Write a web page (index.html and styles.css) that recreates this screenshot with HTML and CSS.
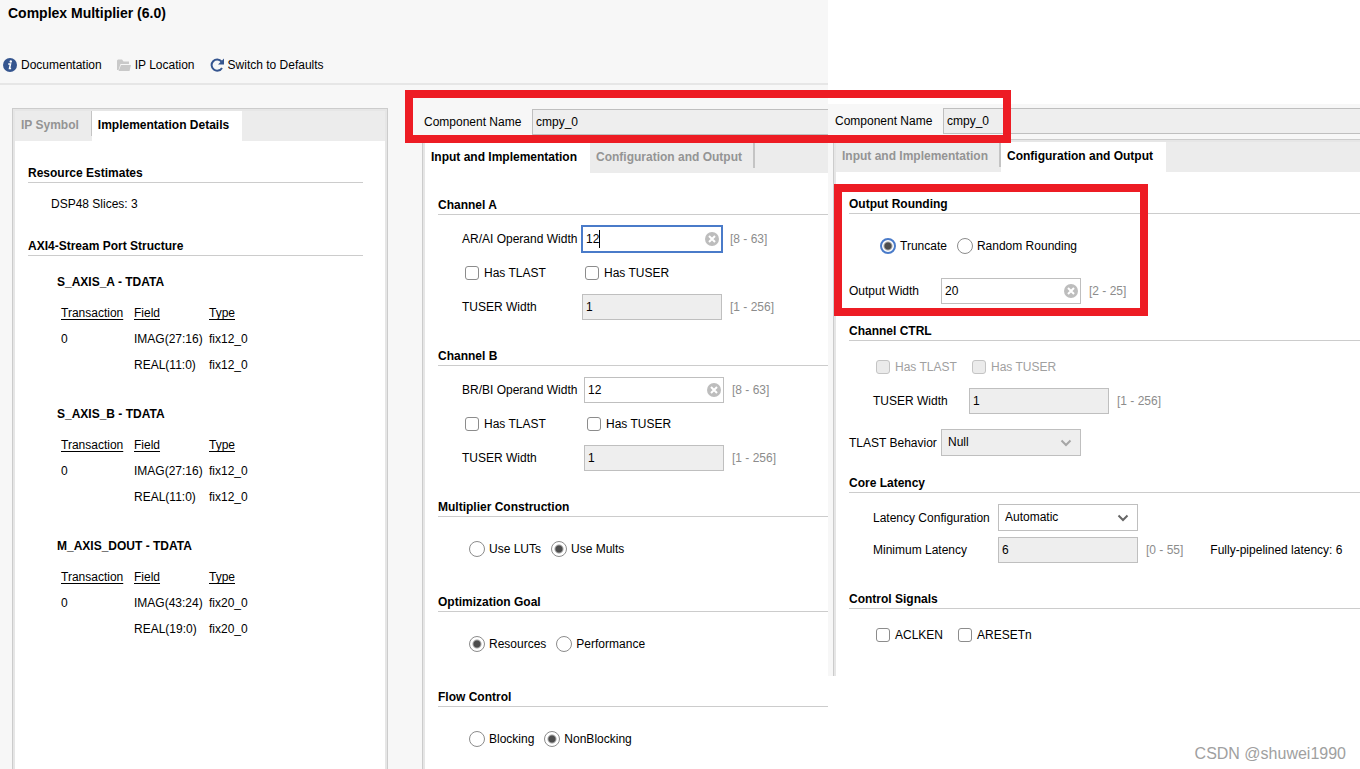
FILE: index.html
```html
<!DOCTYPE html>
<html lang="en">
<head>
    <meta charset="UTF-8">
    <meta name="viewport" content="width=device-width, initial-scale=1.0">
    <title>Complex Multiplier (6.0)</title>
    <link rel="stylesheet" href="styles.css">
</head>
<body>
    <!-- shared icons -->
    <svg class="sprite" aria-hidden="true">
        <symbol id="icon-clear" viewBox="0 0 14 14">
            <circle cx="7" cy="7" r="7" fill="#bdbdbd"/>
            <path d="M4 4l6 6M10 4l-6 6" stroke="#fff" stroke-width="2"/>
        </symbol>
        <symbol id="icon-chevron" viewBox="0 0 12 8">
            <path d="M1.500 1.500l4.500 4.500l4.500-4.500" fill="none" stroke="currentColor" stroke-width="2"/>
        </symbol>
    </svg>

    <div class="page">
        <div class="workspace">
            <header class="header">
                <h1 class="title">Complex Multiplier (6.0)</h1>
                <div class="toolbar">
                    <button class="tool">
                        <svg width="14" height="14" viewBox="0 0 14 14">
                            <circle cx="7" cy="7" r="7" fill="#35558f"/>
                            <circle cx="7.800" cy="3.500" r="1.200" fill="#fff"/>
                            <path d="M5.200 6h2.300l-1 4.500h1.600" fill="none" stroke="#fff" stroke-width="1.500"/>
                        </svg>
                        Documentation
                    </button>
                    <button class="tool">
                        <svg width="14" height="14" viewBox="0 0 14 14">
                            <path d="M0 12V2.500L1 1.500h4l1.500 2H12V6H3.500L1.500 12z" fill="#c9c9c9"/>
                            <path d="M4 7h10l-1.500 6H1.500z" fill="#c9c9c9"/>
                        </svg>
                        IP Location
                    </button>
                    <button class="tool">
                        <svg width="14" height="14" viewBox="0 0 14 14">
                            <path d="M11.500 3.500A5.600 5.600 0 1 0 12 10" fill="none" stroke="#35558f" stroke-width="2"/>
                            <path d="M14 0.500V6.500H8z" fill="#35558f"/>
                        </svg>
                        Switch to Defaults
                    </button>
                </div>
            </header>

            <div class="workspace-body">
                <div class="panel port-panel">
                    <div class="tabs">
                        <button class="tab">IP Symbol</button>
                        <button class="tab active">Implementation Details</button>
                    </div>
                    <div class="panel-body">
                        <h2 class="section-title">Resource Estimates</h2>
                        <p class="estimate">DSP48 Slices: 3</p>

                        <h2 class="section-title">AXI4-Stream Port Structure</h2>
                        <div class="port">
                            <h3 class="port-title">S_AXIS_A - TDATA</h3>
                            <table class="port-table">
                                <tr><th>Transaction</th><th>Field</th><th>Type</th></tr>
                                <tr><td>0</td><td>IMAG(27:16)</td><td>fix12_0</td></tr>
                                <tr><td></td><td>REAL(11:0)</td><td>fix12_0</td></tr>
                            </table>
                        </div>
                        <div class="port">
                            <h3 class="port-title">S_AXIS_B - TDATA</h3>
                            <table class="port-table">
                                <tr><th>Transaction</th><th>Field</th><th>Type</th></tr>
                                <tr><td>0</td><td>IMAG(27:16)</td><td>fix12_0</td></tr>
                                <tr><td></td><td>REAL(11:0)</td><td>fix12_0</td></tr>
                            </table>
                        </div>
                        <div class="port">
                            <h3 class="port-title">M_AXIS_DOUT - TDATA</h3>
                            <table class="port-table">
                                <tr><th>Transaction</th><th>Field</th><th>Type</th></tr>
                                <tr><td>0</td><td>IMAG(43:24)</td><td>fix20_0</td></tr>
                                <tr><td></td><td>REAL(19:0)</td><td>fix20_0</td></tr>
                            </table>
                        </div>
                    </div>
                </div>

                <div class="settings">
                    <div class="component">
                        <label for="name-a">Component Name</label>
                        <input class="text-box" id="name-a" type="text" value="cmpy_0" readonly>
                    </div>
                    <div class="panel">
                        <div class="tabs">
                            <button class="tab active">Input and Implementation</button>
                            <button class="tab">Configuration and Output</button>
                        </div>
                        <div class="panel-body">
                            <h2 class="section-title">Channel A</h2>
                            <div class="fields channel-a">
                                <label for="ar-width">AR/AI Operand Width</label>
                                <div class="box-wrap">
                                    <input class="text-box focused" id="ar-width" type="text" value="12">
                                    <span class="caret"></span>
                                    <button class="clear" aria-label="Clear"><svg width="14" height="14"><use href="#icon-clear"/></svg></button>
                                </div>
                                <span class="range">[8 - 63]</span>
                                <label class="check"><input type="checkbox">Has TLAST</label>
                                <label class="check last"><input type="checkbox">Has TUSER</label>
                                <label for="a-tuser">TUSER Width</label>
                                <input class="text-box" id="a-tuser" type="text" value="1" readonly>
                                <span class="range">[1 - 256]</span>
                            </div>

                            <h2 class="section-title">Channel B</h2>
                            <div class="fields channel-b">
                                <label for="br-width">BR/BI Operand Width</label>
                                <div class="box-wrap">
                                    <input class="text-box" id="br-width" type="text" value="12">
                                    <button class="clear" aria-label="Clear"><svg width="14" height="14"><use href="#icon-clear"/></svg></button>
                                </div>
                                <span class="range">[8 - 63]</span>
                                <label class="check"><input type="checkbox">Has TLAST</label>
                                <label class="check last"><input type="checkbox">Has TUSER</label>
                                <label for="b-tuser">TUSER Width</label>
                                <input class="text-box" id="b-tuser" type="text" value="1" readonly>
                                <span class="range">[1 - 256]</span>
                            </div>

                            <h2 class="section-title">Multiplier Construction</h2>
                            <div class="radios">
                                <label><input type="radio" name="construction">Use LUTs</label>
                                <label><input type="radio" name="construction" checked>Use Mults</label>
                            </div>

                            <h2 class="section-title">Optimization Goal</h2>
                            <div class="radios">
                                <label><input type="radio" name="goal" checked>Resources</label>
                                <label><input type="radio" name="goal">Performance</label>
                            </div>

                            <h2 class="section-title">Flow Control</h2>
                            <div class="radios flow">
                                <label><input type="radio" name="flow">Blocking</label>
                                <label><input type="radio" name="flow" checked>NonBlocking</label>
                            </div>
                        </div>
                    </div>
                </div>
            </div>
        </div>

        <div class="side">
            <div class="side-inner">
                <div class="component">
                    <label for="name-b">Component Name</label>
                    <input class="text-box" id="name-b" type="text" value="cmpy_0" readonly>
                </div>
                <div class="panel">
                    <div class="tabs">
                        <button class="tab">Input and Implementation</button>
                        <button class="tab active">Configuration and Output</button>
                    </div>
                    <div class="panel-body">
                        <h2 class="section-title">Output Rounding</h2>
                        <div class="radios rounding">
                            <label><input class="focused" type="radio" name="rounding" checked>Truncate</label>
                            <label><input type="radio" name="rounding">Random Rounding</label>
                        </div>
                        <div class="fields output-width">
                            <label for="out-width">Output Width</label>
                            <div class="box-wrap">
                                <input class="text-box" id="out-width" type="text" value="20">
                                <button class="clear" aria-label="Clear"><svg width="14" height="14"><use href="#icon-clear"/></svg></button>
                            </div>
                            <span class="range">[2 - 25]</span>
                        </div>

                        <h2 class="section-title">Channel CTRL</h2>
                        <div class="fields ctrl">
                            <label class="check disabled"><input type="checkbox" disabled>Has TLAST</label>
                            <label class="check last disabled"><input type="checkbox" disabled>Has TUSER</label>
                            <label for="ctrl-tuser">TUSER Width</label>
                            <input class="text-box" id="ctrl-tuser" type="text" value="1" readonly>
                            <span class="range">[1 - 256]</span>
                        </div>
                        <div class="fields behavior">
                            <label for="tlast">TLAST Behavior</label>
                            <div class="box-wrap select-wrap disabled">
                                <select id="tlast" disabled><option>Null</option></select>
                                <svg class="chevron" width="12" height="8"><use href="#icon-chevron"/></svg>
                            </div>
                        </div>

                        <h2 class="section-title">Core Latency</h2>
                        <div class="fields latency">
                            <label for="lat-config">Latency Configuration</label>
                            <div class="box-wrap select-wrap">
                                <select id="lat-config"><option>Automatic</option><option>Manual</option></select>
                                <svg class="chevron" width="12" height="8"><use href="#icon-chevron"/></svg>
                            </div>
                            <span></span>
                            <label for="min-lat">Minimum Latency</label>
                            <input class="text-box" id="min-lat" type="text" value="6" readonly>
                            <div class="latency-info">
                                <span class="range">[0 - 55]</span>
                                <span>Fully-pipelined latency: 6</span>
                            </div>
                        </div>

                        <h2 class="section-title">Control Signals</h2>
                        <div class="signals">
                            <label class="check"><input type="checkbox">ACLKEN</label>
                            <label class="check"><input type="checkbox">ARESETn</label>
                        </div>
                    </div>
                </div>
            </div>
            <div class="highlight highlight-output"></div>
        </div>

        <div class="highlight highlight-name"></div>
        <div class="watermark">CSDN @shuwei1990</div>
    </div>
</body>
</html>
```

FILE: styles.css
```css
/* Base styling */
* {
    box-sizing: border-box;
}

body {
    margin: 0;
    background-color: #ffffff;
    color: #000000;
    font-family: "Liberation Sans", Arial, sans-serif;
    font-size: 12px;
    line-height: 18px;
}

h1,
h2,
h3,
p {
    margin: 0;
    font-size: 12px;
}

button,
input,
select {
    margin: 0;
    font: inherit;
    color: inherit;
}

button {
    border: none;
    background: none;
    padding: 0;
    cursor: pointer;
}

svg {
    display: block;
}

.sprite {
    position: absolute;
    width: 0;
    height: 0;
}

.page {
    position: relative;
    display: grid;
    grid-template-columns: minmax(0, 1fr) 532px;
    min-height: 100vh;
}

/* Main window */
.workspace {
    display: flex;
    flex-direction: column;
    background-color: #f7f7f7;
}

.header {
    padding: 4px 0 9px 3px;
    border-bottom: 2px solid #e6e6e6;
}

.title {
    padding-left: 5px;
    font-size: 14px;
}

.toolbar {
    display: flex;
    gap: 15px;
    margin-top: 34px;
}

.tool {
    display: flex;
    align-items: center;
    gap: 4px;
}

.workspace-body {
    flex: 1;
    display: flex;
    gap: 34px;
    padding: 23px 0 0 12px;
}

/* Panels and tabs */
.panel {
    display: flex;
    flex-direction: column;
    flex: 1;
    padding: 2px 0 0 2px;
    border: 1px solid #cccccc;
    border-width: 1px 0 0 1px;
    background-color: #e6e6e6;
}

.port-panel {
    flex: 0 0 376px;
    padding-right: 2px;
    border-right-width: 1px;
}

.tabs {
    display: flex;
    height: 30px;
    background-color: #ececec;
}

.tab {
    position: relative;
    height: 30px;
    padding: 0 13px 2px 6px;
    font-weight: bold;
    color: #949494;
}

.tab::after {
    content: "";
    position: absolute;
    top: 0;
    right: 0;
    width: 2px;
    height: 25px;
    background-color: #c4c4c4;
}

.port-panel .tab::after {
    width: 1px;
}

.tab.active {
    background-color: #ffffff;
    color: #000000;
}

.tab.active::after {
    display: none;
}

.panel-body {
    flex: 1;
    padding: 22px 0 0 13px;
    background-color: #ffffff;
}

.port-panel .panel-body {
    padding-right: 22px;
}

.section-title {
    padding-top: 1px;
    border-bottom: 1px solid #cccccc;
}

/* Port structure */
.estimate {
    padding: 12px 0 23px 23px;
}

.port {
    padding: 17px 0 10px 29px;
}

.port-title {
    margin-bottom: 9px;
}

.port-table {
    margin-left: 4px;
    border-collapse: collapse;
}

.port-table th,
.port-table td {
    height: 26px;
    padding: 0;
    text-align: left;
}

.port-table th {
    font-weight: normal;
    text-decoration: underline;
    text-underline-offset: 2px;
}

.port-table th:nth-child(1) {
    width: 73px;
}

.port-table th:nth-child(2) {
    width: 75px;
}

/* Settings forms */
.settings {
    flex: 1;
    display: flex;
    flex-direction: column;
    min-width: 0;
    padding-top: 1px;
}

.component {
    display: grid;
    grid-template-columns: 108px minmax(0, 1fr);
    align-items: center;
    padding-left: 2px;
    margin-bottom: 5px;
}

.component .text-box {
    border-right: none;
}

.fields {
    display: grid;
    align-items: center;
    row-gap: 8px;
    padding: 11px 0 26px 24px;
}

.channel-a {
    grid-template-columns: 120px 140px 1fr;
}

.channel-b {
    grid-template-columns: 122px 140px 1fr;
}

.output-width,
.behavior {
    grid-template-columns: 92px 140px 1fr;
    padding: 0 0 17px 0;
}

.ctrl {
    grid-template-columns: 96px 140px 1fr;
    padding: 13px 0 15px 24px;
}

.latency {
    grid-template-columns: 125px 140px 1fr;
    row-gap: 6px;
}

.latency-info {
    display: flex;
    gap: 27px;
}

.range {
    padding-left: 8px;
    color: #8c8c8c;
}

.text-box {
    display: block;
    width: 100%;
    height: 26px;
    padding: 0 3px;
    border: 1px solid #bfbfbf;
    border-radius: 0;
    background-color: #ffffff;
    outline: none;
}

.text-box:read-only {
    background-color: #eeeeee;
}

.text-box.focused {
    border-color: #4a7bc9;
    box-shadow: 0 0 0 1px #4a7bc9;
}

.box-wrap {
    position: relative;
}

.caret {
    position: absolute;
    top: 4px;
    left: 17px;
    width: 1px;
    height: 18px;
    background-color: #000000;
}

.clear {
    position: absolute;
    top: 6px;
    right: 3px;
}

.select-wrap select {
    display: block;
    width: 100%;
    height: 27px;
    padding: 0 6px 2px;
    border: 1px solid #bfbfbf;
    border-radius: 0;
    background-color: #ffffff;
    appearance: none;
    opacity: 1;
}

.select-wrap.disabled select {
    background-color: #eeeeee;
}

.chevron {
    position: absolute;
    top: 10px;
    right: 9px;
    color: #666666;
    pointer-events: none;
}

.disabled .chevron {
    color: #a6a6a6;
}

/* Check boxes and radios */
.check {
    display: flex;
    align-items: center;
    gap: 5px;
    height: 26px;
    padding-left: 3px;
}

.check.last {
    grid-column: 2 / 4;
}

.check.disabled {
    color: #a0a0a0;
}

.check input {
    width: 14px;
    height: 14px;
    border: 1px solid #8c8c8c;
    border-radius: 3px;
    background-color: #ffffff;
    appearance: none;
}

.check input:disabled {
    border-color: #c4c4c4;
    background-color: #ebebeb;
}

.radios {
    display: flex;
    gap: 10px;
    padding: 19px 0 30px 31px;
}

.rounding {
    padding-bottom: 19px;
}

.flow {
    padding-bottom: 17px;
}

.radios label {
    display: flex;
    align-items: center;
    gap: 4px;
    height: 26px;
}

.radios input {
    width: 16px;
    height: 16px;
    border: 1px solid #8c8c8c;
    border-radius: 50%;
    background-color: #ffffff;
    appearance: none;
}

.radios input:checked {
    background-image: radial-gradient(circle, #4d4d4d 3px, transparent 5px);
}

.radios input.focused {
    border: 2px solid #4a7bc9;
}

.signals {
    display: flex;
    gap: 12px;
    padding: 13px 0 28px 24px;
}

/* Output page */
.side {
    position: relative;
    padding-top: 104px;
}

.side-inner {
    padding: 4px 0 0 5px;
    background-color: #f7f7f7;
}

/* Annotations over the panels */
.highlight {
    position: absolute;
    border: 8px solid #ed1c24;
    pointer-events: none;
}

.highlight-name {
    top: 90px;
    right: 349px;
    width: 606px;
    height: 53px;
}

.highlight-output {
    top: 184px;
    left: 6px;
    width: 314px;
    height: 132px;
}

.watermark {
    position: absolute;
    right: 14px;
    bottom: 6px;
    font-size: 16px;
    color: #a0a0a0;
}
```
